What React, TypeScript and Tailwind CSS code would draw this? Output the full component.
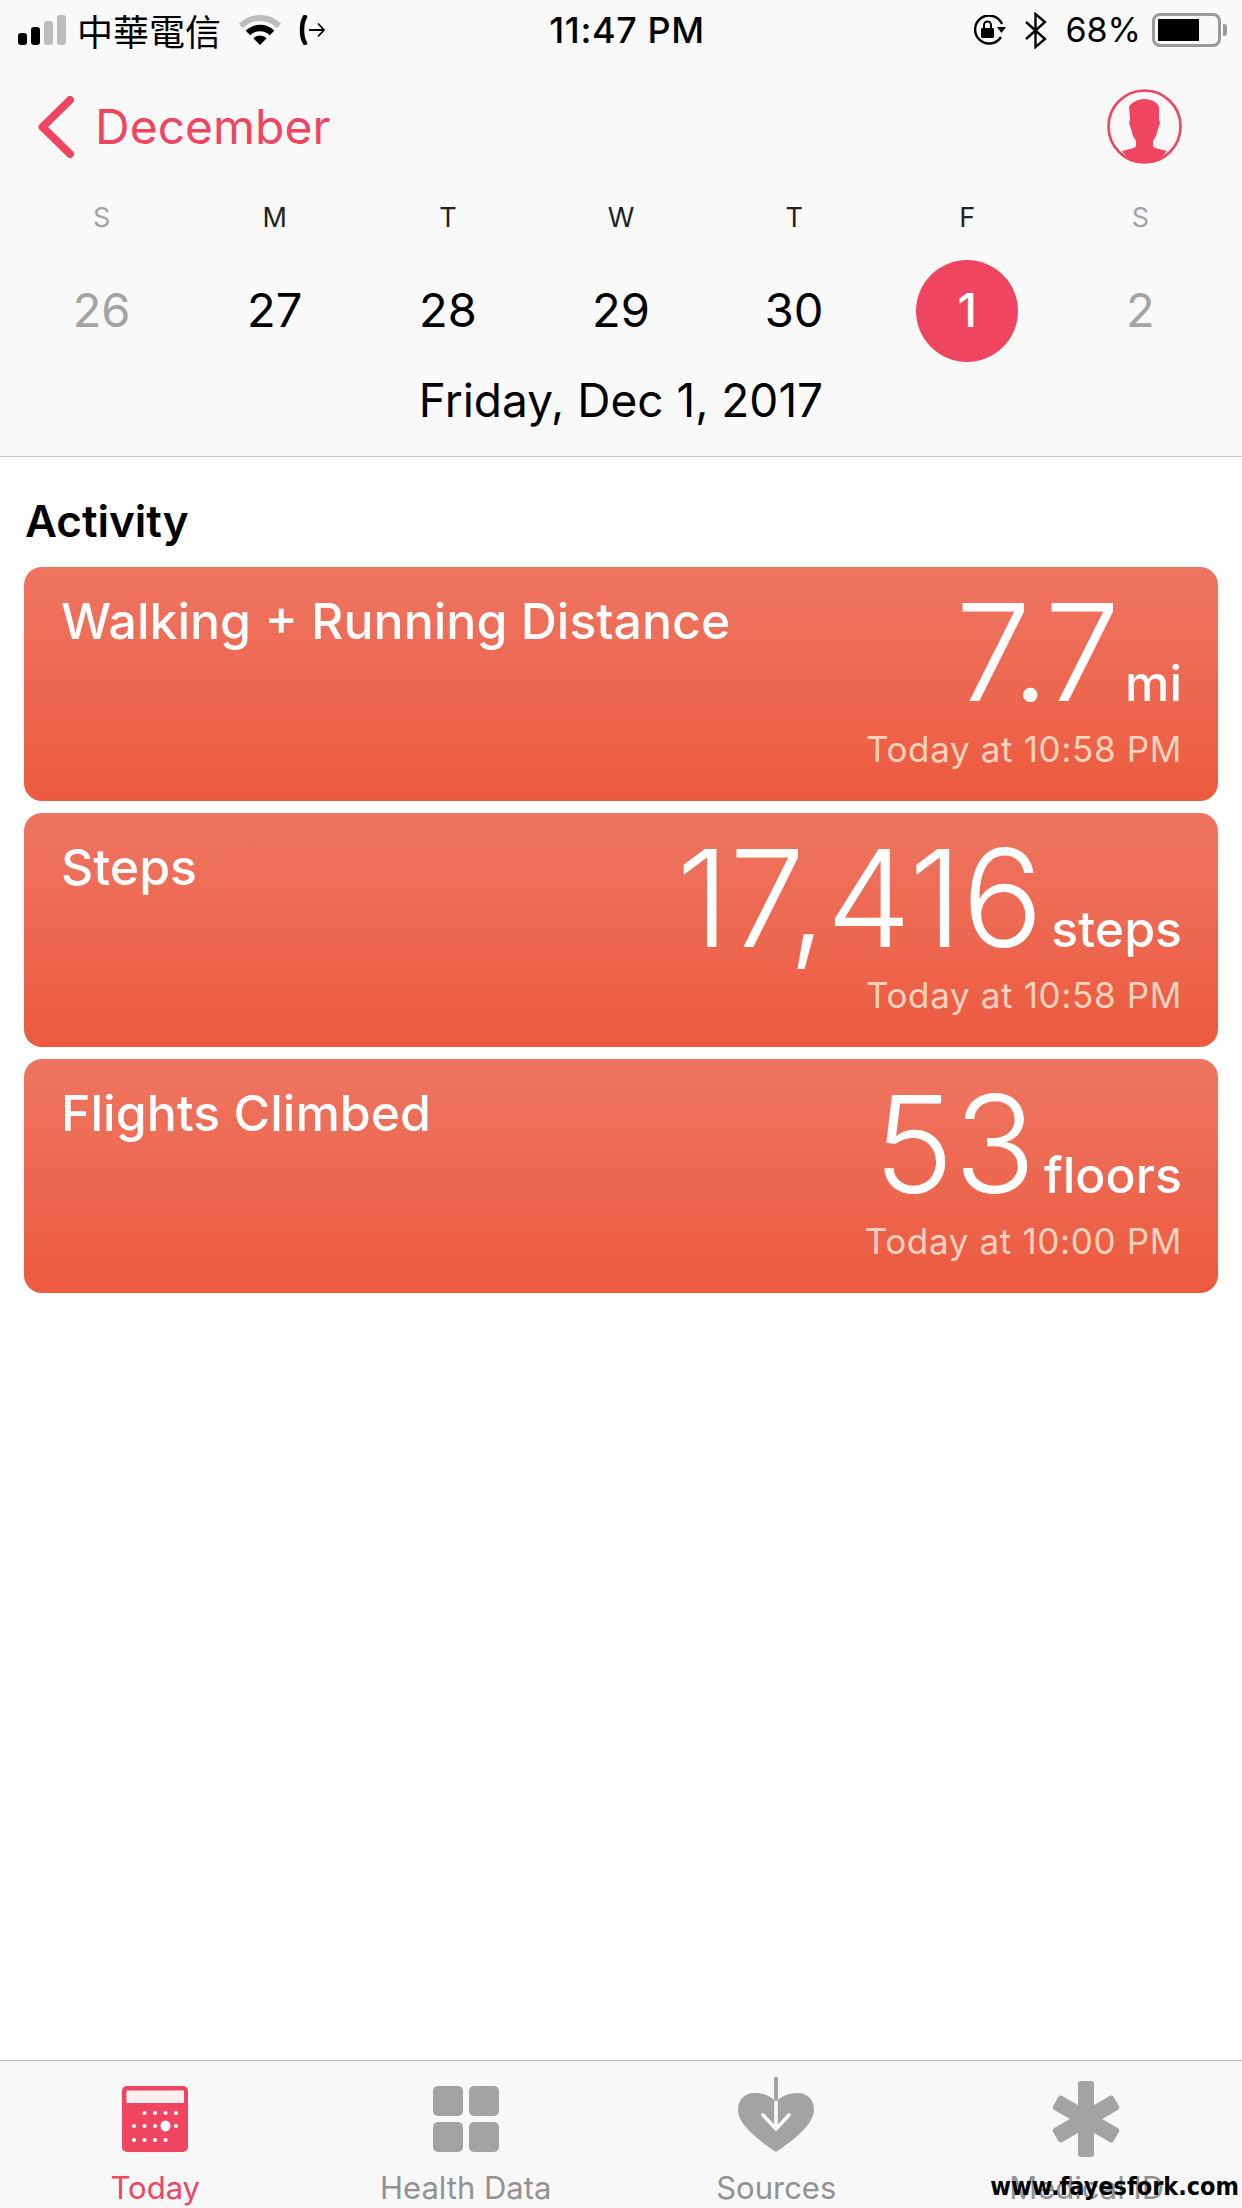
import React from 'react';

const days = [
  { letter: 'S', date: '26', muted: true },
  { letter: 'M', date: '27' },
  { letter: 'T', date: '28' },
  { letter: 'W', date: '29' },
  { letter: 'T', date: '30' },
  { letter: 'F', date: '1', selected: true },
  { letter: 'S', date: '2', muted: true },
];

const cards = [
  { title: 'Walking + Running Distance', value: '7.7', valueClass: 'tracking-[-3px]', unit: 'mi', time: 'Today at 10:58 PM' },
  { title: 'Steps', value: '17,416', valueClass: '', unit: 'steps', time: 'Today at 10:58 PM' },
  { title: 'Flights Climbed', value: '53', valueClass: '', unit: 'floors', time: 'Today at 10:00 PM' },
];

function StatusLeft() {
  return (
    <div className="flex items-center">
      <div className="ml-[18px] flex h-[30px] items-end gap-[4px]">
        <div className="h-[12px] w-[9px] rounded-[3px] bg-black" />
        <div className="h-[18px] w-[9px] rounded-[3px] bg-black" />
        <div className="h-[24px] w-[9px] rounded-[3px] bg-[#bdbdbd]" />
        <div className="h-[30px] w-[9px] rounded-[3px] bg-[#bdbdbd]" />
      </div>
      <span className="ml-[11px] w-[162px] text-[36px] leading-[40px] text-black font-['Noto_Sans_CJK_TC',sans-serif]">中華電信</span>
      <svg width="42" height="30" viewBox="0 0 42 30">
        <path d="M1.9 10.9A27 27 0 0 1 40.1 10.9" fill="none" stroke="#bdbdbd" strokeWidth="6" />
        <path d="M9 18A17 17 0 0 1 33 18" fill="none" stroke="#000" strokeWidth="6.5" />
        <path d="M21 30L14.3 23.3A9.5 9.5 0 0 1 27.7 23.3Z" fill="#000" />
      </svg>
      <svg className="ml-[17px]" width="28" height="30" viewBox="0 0 28 30" fill="none" stroke="#000">
        <path d="M7 2C3 8 3 22 7 28" strokeWidth="4.5" strokeLinecap="round" />
        <path d="M11 15H26M20 8.5l6 6.5-6 6.5" strokeWidth="1.8" />
      </svg>
    </div>
  );
}

function StatusRight() {
  return (
    <div className="flex items-center justify-end pr-[15px]">
      <svg width="34" height="30" viewBox="0 0 34 30" fill="none">
        <path d="M30 9A14 14 0 1 0 29 22" stroke="#000" strokeWidth="2.4" />
        <path d="M25 12h9l-4.5 6z" fill="#000" />
        <rect x="9" y="13" width="13" height="10" rx="1.2" fill="#000" />
        <path d="M12 13V10a3.5 3.5 0 0 1 7 0v3" stroke="#000" strokeWidth="2" />
      </svg>
      <svg className="ml-[19px]" width="22" height="37" viewBox="0 0 22 37" fill="none">
        <path d="M1 10L20 27L10.5 35V2L20 10L1 27" stroke="#000" strokeWidth="2.4" />
      </svg>
      <span className="ml-[18px] text-[34px] leading-[40px] text-black">68%</span>
      <div className="ml-[11px] flex items-center">
        <div className="h-[34px] w-[69px] rounded-[8px] border-[3px] border-[#9a9a9a] p-[3px]">
          <div className="h-full w-[41px] bg-black" />
        </div>
        <div className="ml-[2px] h-[12px] w-[4px] rounded-r-[3px] bg-[#9a9a9a]" />
      </div>
    </div>
  );
}

function ProfileIcon() {
  return (
    <svg width="75" height="75" viewBox="0 0 75 75">
      <circle cx="37.5" cy="37.5" r="36" fill="none" stroke="#ef4560" strokeWidth="2.6" />
      <path
        d="M37 10C42 10 50 12 52 18L52 30L53 34L51 40L49 47L46 52L46 57L48 59L60 62C53 71 45 74 37 74C29 74 21 71 15 62L27 59L29 57L29 52L26 47L24 40L22 34L23 30L22 18C24 13 32 10 37 10Z"
        fill="#ef4560"
      />
    </svg>
  );
}

function TodayIcon() {
  const rows = [
    { y: 27, xs: [22.5, 33, 43.5, 54] },
    { y: 40, xs: [12, 22.5, 33, 54] },
    { y: 54, xs: [12, 22.5, 33, 43.5] },
  ];
  return (
    <svg width="66" height="66" viewBox="0 0 66 66">
      <rect width="66" height="66" rx="5" fill="#ef4560" />
      <rect x="4.5" y="4.5" width="57.5" height="12.5" fill="#fff" fillOpacity="0.92" />
      {rows.map((row) => row.xs.map((x) => <circle key={`${row.y}-${x}`} cx={x} cy={row.y} r="2.1" fill="#fff" />))}
      <ellipse cx="43.5" cy="40" rx="5" ry="5.4" fill="#fff" />
    </svg>
  );
}

function HealthDataIcon() {
  return (
    <div className="grid grid-cols-2 gap-[6px]">
      <div className="h-[30px] w-[30px] rounded-[5px] bg-[#a3a3a3]" />
      <div className="h-[30px] w-[30px] rounded-[5px] bg-[#a3a3a3]" />
      <div className="h-[30px] w-[30px] rounded-[5px] bg-[#a3a3a3]" />
      <div className="h-[30px] w-[30px] rounded-[5px] bg-[#a3a3a3]" />
    </div>
  );
}

function SourcesIcon() {
  return (
    <svg width="76" height="75" viewBox="0 0 76 75" fill="none">
      <path
        d="M38 75C22 64 0 48 0 33C0 22 7 16 17 16C26 16 34 20 38 25C42 20 50 16 59 16C69 16 76 22 76 33C76 48 54 64 38 75Z"
        fill="#a3a3a3"
      />
      <path d="M38 1.5V24" stroke="#a3a3a3" strokeWidth="4" strokeLinecap="round" />
      <path d="M38 25V50M25 38L38 52L51 38" stroke="#f8f8f8" strokeWidth="3.6" strokeLinecap="round" strokeLinejoin="round" />
    </svg>
  );
}

function MedicalIcon() {
  return (
    <svg width="70" height="76" viewBox="0 0 70 76" fill="#a3a3a3">
      <rect x="26" y="0" width="16" height="76" rx="3" />
      <rect x="26" y="3" width="16" height="70" rx="3" transform="rotate(60 34 38)" />
      <rect x="26" y="3" width="16" height="70" rx="3" transform="rotate(-60 34 38)" />
    </svg>
  );
}

export default function App() {
  return (
    <div className="relative flex h-[2208px] w-[1242px] flex-col overflow-hidden bg-white font-['Inter','Noto_Sans_CJK_TC',sans-serif]">
      <header className="h-[457px] shrink-0 border-b border-[#c4c4c4] bg-[#f9f9f9]">
        <div className="grid h-[60px] grid-cols-[1fr_auto_1fr] items-center">
          <StatusLeft />
          <span className="pl-[12px] text-[36px] font-medium leading-[40px] tracking-[0.6px] text-black">11:47 PM</span>
          <StatusRight />
        </div>

        <div className="mt-[29px] flex h-[75px] items-center justify-between pl-[38px] pr-[60px]">
          <div className="flex items-center">
            <svg width="37" height="62" viewBox="0 0 37 62" fill="none">
              <path d="M32 4L4.5 31L32 58" stroke="#ef4560" strokeWidth="8" strokeLinecap="round" strokeLinejoin="round" />
            </svg>
            <span className="ml-[20px] text-[48px] leading-[60px] text-[#ef4560]">December</span>
          </div>
          <ProfileIcon />
        </div>

        <div className="mt-[34px] grid grid-cols-7 px-[15px]">
          {days.map((d, i) => (
            <div key={i} className={`text-center text-[27px] leading-[40px] ${d.muted ? 'text-[#a3a3a3]' : 'text-[#222222]'}`}>
              {d.letter}
            </div>
          ))}
        </div>

        <div className="mt-[22px] grid grid-cols-7 px-[15px]">
          {days.map((d, i) => (
            <div key={i} className="flex h-[102px] items-center justify-center">
              {d.selected ? (
                <div className="flex h-[102px] w-[102px] items-center justify-center rounded-full bg-[#ef4560] pb-[1px] text-[47px] font-medium text-white">
                  {d.date}
                </div>
              ) : (
                <span className={`pb-[2px] text-[47px] ${d.muted ? 'text-[#a3a3a3]' : 'text-black'}`}>{d.date}</span>
              )}
            </div>
          ))}
        </div>

        <div className="mt-[10px] text-center text-[46px] leading-[56px] text-black">Friday, Dec 1, 2017</div>
      </header>

      <main className="flex-1 px-[24px]">
        <h2 className="ml-[1px] mt-[36px] text-[44px] font-semibold leading-[56px] text-black">Activity</h2>
        <div className="mt-[18px] flex flex-col gap-[12px]">
          {cards.map((c) => (
            <div
              key={c.title}
              className="flex h-[234px] justify-between rounded-[18px] bg-gradient-to-b from-[#ee7561] to-[#ec5a3f] pl-[37px] pr-[36px]"
            >
              <div className="mt-[26px] text-[50px] font-medium leading-[56px] text-white">{c.title}</div>
              <div className="flex flex-col items-end pt-[18px]">
                <div className="flex items-baseline text-white">
                  <span className={`text-[135px] font-light leading-[135px] ${c.valueClass}`}>{c.value}</span>
                  <span className="ml-[8px] text-[50px] font-medium leading-[56px]">{c.unit}</span>
                </div>
                <div className="mt-[9px] text-[35px] leading-[40px] tracking-[0.65px] text-[#fdd3bd]">{c.time}</div>
              </div>
            </div>
          ))}
        </div>
      </main>

      <nav className="grid h-[148px] shrink-0 grid-cols-4 border-t border-[#b5b5b5] bg-[#f8f8f8]">
        <div className="flex flex-col items-center">
          <div className="flex h-[91px] items-end"><TodayIcon /></div>
          <span className="mt-[18px] text-[31px] leading-[36px] text-[#ef4560]">Today</span>
        </div>
        <div className="flex flex-col items-center">
          <div className="flex h-[91px] items-end"><HealthDataIcon /></div>
          <span className="mt-[18px] text-[31px] leading-[36px] text-[#929292]">Health Data</span>
        </div>
        <div className="flex flex-col items-center">
          <div className="flex h-[91px] items-end"><SourcesIcon /></div>
          <span className="mt-[18px] text-[31px] leading-[36px] text-[#929292]">Sources</span>
        </div>
        <div className="flex flex-col items-center">
          <div className="flex h-[96px] items-end"><MedicalIcon /></div>
          <span className="mt-[13px] text-[31px] leading-[36px] text-[#929292]">Medical ID</span>
        </div>
      </nav>

      <span className="absolute right-[3px] top-[2169px] text-[25px] font-bold leading-[36px] text-black font-['DejaVu_Sans_Condensed','DejaVu_Sans',sans-serif]">
        www.fayesfork.com
      </span>
    </div>
  );
}
